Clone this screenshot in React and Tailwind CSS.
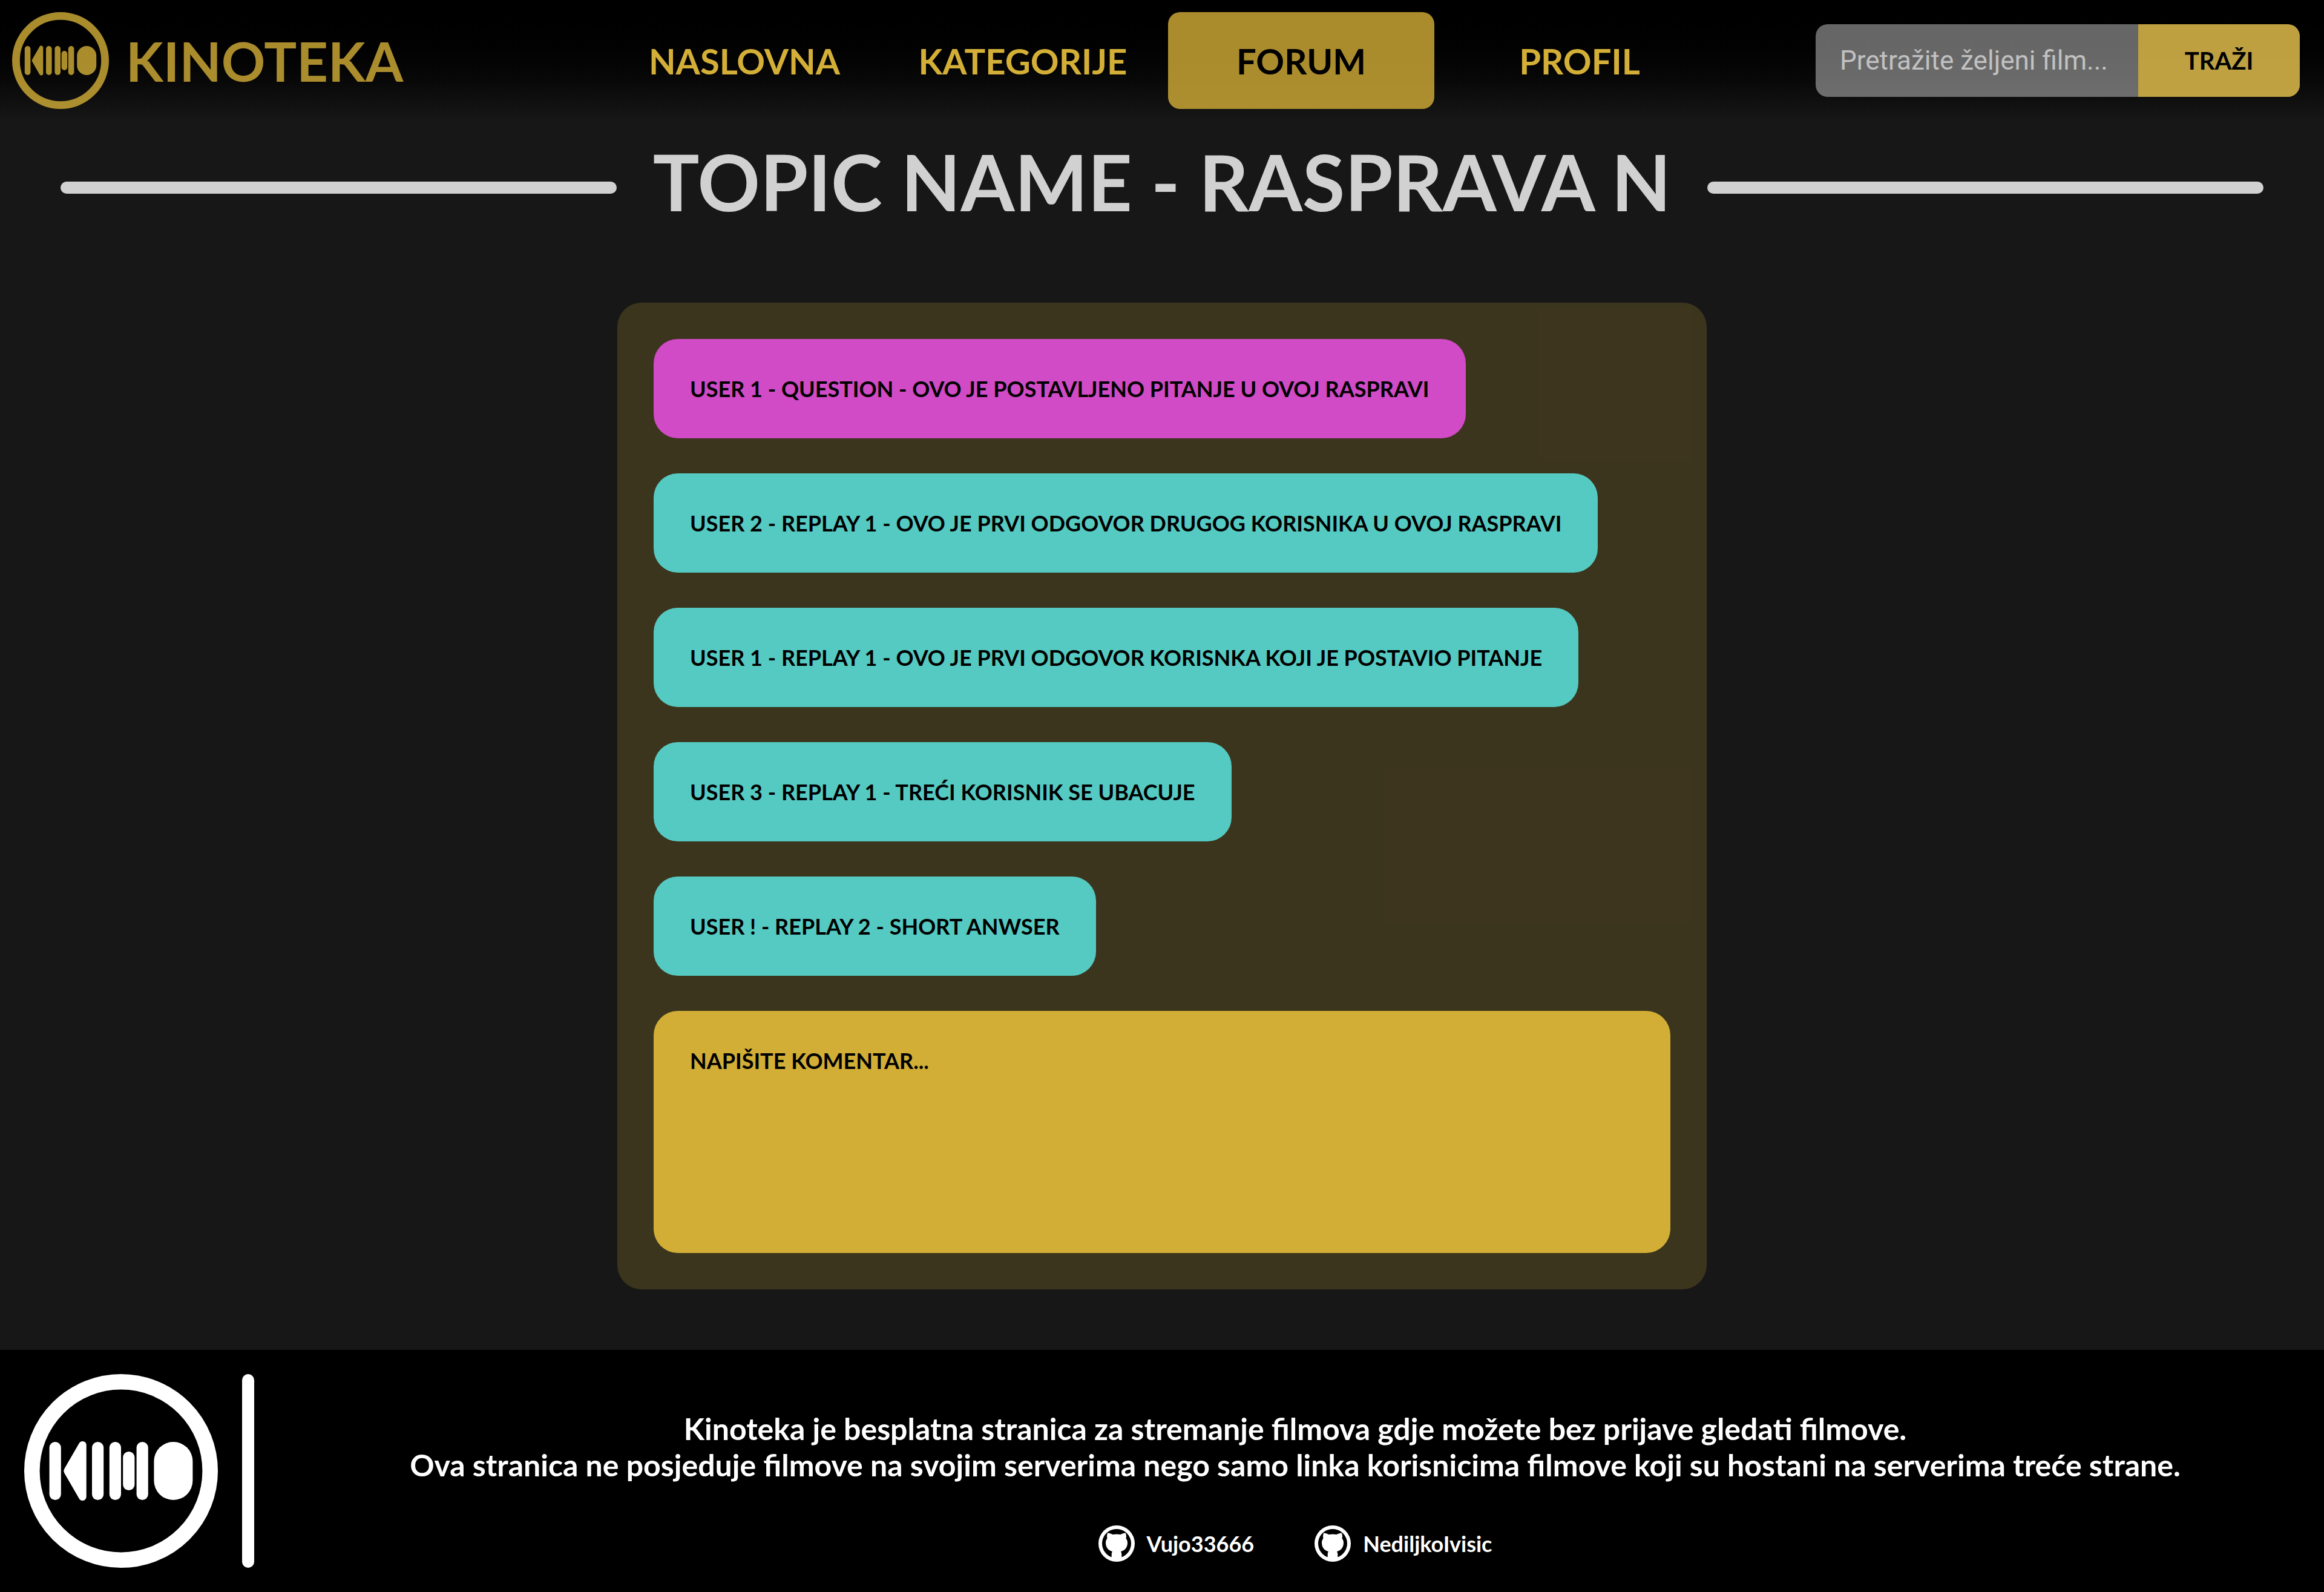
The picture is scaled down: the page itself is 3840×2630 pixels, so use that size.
import React from "react";

const navigation = [
  { label: "NASLOVNA", active: false },
  { label: "KATEGORIJE", active: false },
  { label: "FORUM", active: true },
  { label: "PROFIL", active: false },
];

const messages = [
  { text: "USER 1 - QUESTION - OVO JE POSTAVLJENO PITANJE U OVOJ RASPRAVI", question: true },
  { text: "USER 2 - REPLAY 1 - OVO JE PRVI ODGOVOR DRUGOG KORISNIKA U OVOJ RASPRAVI" },
  { text: "USER 1 - REPLAY 1 - OVO JE PRVI ODGOVOR KORISNKA KOJI JE POSTAVIO PITANJE" },
  { text: "USER 3 - REPLAY 1 - TREĆI KORISNIK SE UBACUJE" },
  { text: "USER ! - REPLAY 2 - SHORT ANWSER" },
];

const authors = ["Vujo33666", "NediljkoIvisic"];

function Logo({ className }) {
  return (
    <svg viewBox="0 0 320 320" className={className} fill="currentColor" aria-hidden="true">
      <circle cx="160" cy="160" r="147.2" fill="none" stroke="currentColor" strokeWidth="25.6" />
      <rect x="41.6" y="112" width="19.2" height="96" rx="9.6" />
      <path
        d="M71.7 160 96.3 117.4V202.6Z"
        stroke="currentColor"
        strokeWidth="12.8"
        strokeLinejoin="round"
      />
      <rect x="112" y="112" width="19.2" height="96" rx="9.6" />
      <rect x="140.8" y="112" width="19.2" height="96" rx="9.6" />
      <rect x="163.2" y="128" width="19.2" height="64" rx="9.6" />
      <rect x="185.6" y="112" width="19.2" height="96" rx="9.6" />
      <rect x="214.4" y="112" width="64" height="96" rx="32" />
    </svg>
  );
}

/* White disc with a cat silhouette inside a dark ring. */
function GithubMark({ className }) {
  return (
    <svg viewBox="0 0 60 60" className={className} aria-hidden="true">
      <circle cx="30" cy="30" r="30" fill="white" />
      <path
        fill="black"
        d="M30 6C16.500 6 6 16.800 6 30c0 10.200 6.500 19 15.700 22.400V47.500c0-1.800.5-3.200 1.300-4.300C16.500 41.500 12 36.500 12 28.800c0-3 .9-5.400 2.500-7.300-.7-2.400-.6-5.600.5-9 2.900.1 5.700 1 8.400 2.600 4.200-.9 9-.9 13.200 0 2.700-1.600 5.500-2.500 8.400-2.600 1.100 3.400 1.200 6.600.5 9 1.600 1.900 2.500 4.300 2.500 7.300 0 7.700-4.500 12.700-11 14.400.8 1.100 1.300 2.500 1.300 4.300v4.900C47.500 49 54 40.200 54 30 54 16.800 43.500 6 30 6Z"
      />
    </svg>
  );
}

function Header() {
  return (
    <header className="grid grid-cols-[1fr_auto_1fr] items-center bg-linear-to-b from-black to-[#171717] p-5">
      <a href="#" className="flex items-center gap-7 text-[#d4af37] opacity-80">
        <Logo className="size-40 shrink-0" />
        <span className="text-[90px] leading-[120px]">KINOTEKA</span>
      </a>
      <nav className="flex gap-5">
        {navigation.map(({ label, active }) => (
          <a
            key={label}
            href="#"
            aria-current={active ? "page" : undefined}
            className={
              active
                ? "flex h-40 w-[440px] items-center justify-center rounded-[20px] bg-[#d4af37]/80 text-[58px] text-black"
                : "flex h-40 w-[440px] items-center justify-center rounded-[20px] text-[58px] text-[#d4af37]"
            }
          >
            {label}
          </a>
        ))}
      </nav>
      <form className="mr-5 flex h-[120px] w-[800px] justify-self-end overflow-hidden rounded-[20px] bg-white/40">
        <input
          type="text"
          aria-label="Pretražite željeni film"
          placeholder="Pretražite željeni film..."
          className="w-2/3 bg-transparent px-10 font-['Roboto',sans-serif] text-[44px] font-normal text-white outline-none placeholder:text-white/60"
        />
        <button type="button" className="w-1/3 bg-[#d4af37]/80 text-[40px] text-black">
          TRAŽI
        </button>
      </form>
    </header>
  );
}

function Title() {
  return (
    <div className="flex items-center gap-[60px] px-[100px] pt-7">
      <div className="h-5 flex-1 rounded-full bg-white/80" />
      <h1 className="pb-5 text-[128px] leading-[144px] text-white/80">TOPIC NAME - RASPRAVA N</h1>
      <div className="h-5 flex-1 rounded-full bg-white/80" />
    </div>
  );
}

function Discussion() {
  return (
    <section className="mx-auto mt-[108px] mb-[100px] flex w-full max-w-[1800px] flex-col items-start gap-[58px] rounded-[40px] bg-[#d4af37]/20 p-[60px] text-[36px] leading-[44px] text-black">
      {messages.map(({ text, question }) => (
        <p
          key={text}
          className={
            question
              ? "rounded-[40px] bg-[#d14ac6] p-[60px]"
              : "rounded-[40px] bg-[#55cac2] p-[60px]"
          }
        >
          {text}
        </p>
      ))}
      <textarea
        aria-label="Komentar"
        placeholder="NAPIŠITE KOMENTAR..."
        className="block h-[400px] w-full resize-none rounded-[40px] bg-[#d2ae36] p-[60px] outline-none placeholder:text-black"
      />
    </section>
  );
}

function Footer() {
  return (
    <footer className="flex gap-5 bg-black text-white">
      <div className="flex shrink-0 gap-10 py-10 pl-10">
        <Logo className="size-80" />
        <div className="w-5 rounded-full bg-white" />
      </div>
      <div className="flex flex-1 flex-col items-center justify-end gap-[70px] pb-[50px]">
        <p className="text-center text-[50px] leading-[60px]">
          Kinoteka je besplatna stranica za stremanje filmova gdje možete bez prijave gledati filmove.
          <br />
          Ova stranica ne posjeduje filmove na svojim serverima nego samo linka korisnicima filmove koji su hostani na
          serverima treće strane.
        </p>
        <div className="flex gap-[100px]">
          {authors.map((name) => (
            <a key={name} href="#" className="flex items-center gap-5 text-[36px] leading-[60px]">
              <GithubMark className="size-[60px]" />
              {name}
            </a>
          ))}
        </div>
      </div>
    </footer>
  );
}

export default function App() {
  return (
    <div className="flex min-h-screen flex-col bg-[#171717] font-['Lato',sans-serif] font-bold">
      <Header />
      <main className="flex-1">
        <Title />
        <Discussion />
      </main>
      <Footer />
    </div>
  );
}
